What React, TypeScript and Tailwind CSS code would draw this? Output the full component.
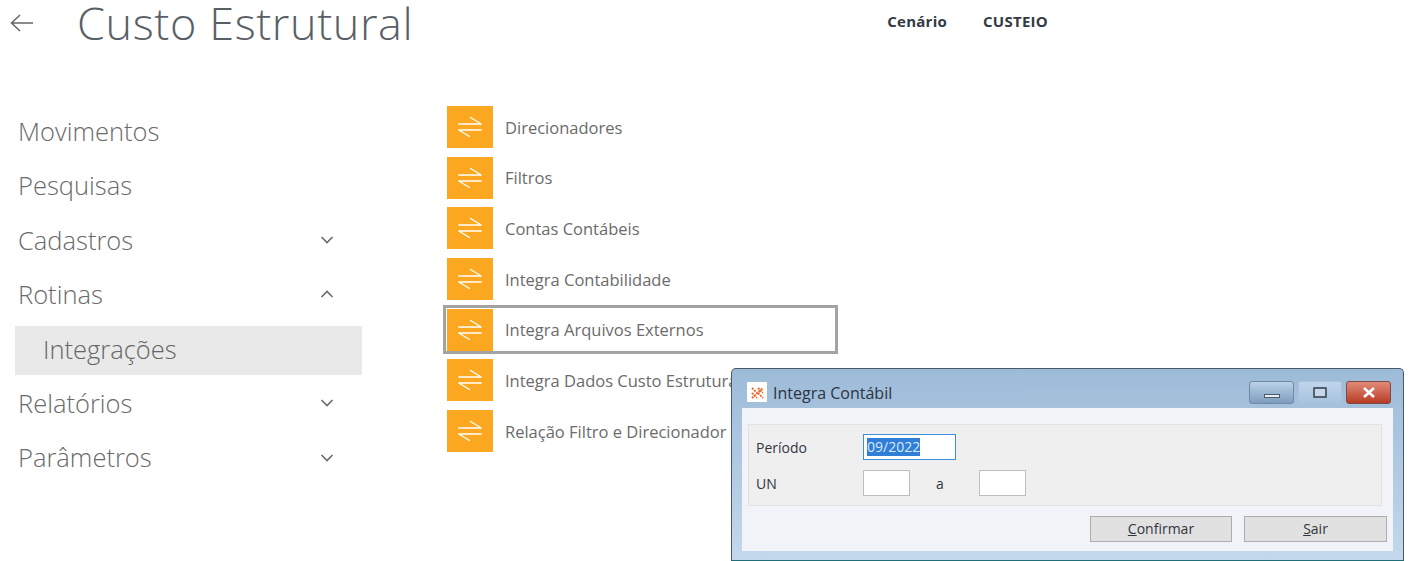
import React from "react";

const Swap = () => (
  <svg width="24" height="24" viewBox="0 0 24 24" fill="none" stroke="#fff" strokeWidth="1.4" strokeLinecap="round" strokeLinejoin="round">
    <path d="M0.8 9H23.2L12.5 2.5" />
    <path d="M23.2 15H0.8L11.5 21.5" />
  </svg>
);

const Chevron = ({ up }: { up?: boolean }) => (
  <svg width="14" height="8" viewBox="0 0 14 8" fill="none" stroke="#6a6a6a" strokeWidth="1.6">
    <path d={up ? "M1.5 7L7 1.5L12.5 7" : "M1.5 1L7 6.5L12.5 1"} />
  </svg>
);

const side: { t: string; c?: "d" | "u"; sel?: boolean }[] = [
  { t: "Movimentos" },
  { t: "Pesquisas" },
  { t: "Cadastros", c: "d" },
  { t: "Rotinas", c: "u" },
  { t: "Integrações", sel: true },
  { t: "Relatórios", c: "d" },
  { t: "Parâmetros", c: "d" },
];

const items = [
  "Direcionadores",
  "Filtros",
  "Contas Contábeis",
  "Integra Contabilidade",
  "Integra Arquivos Externos",
  "Integra Dados Custo Estrutural",
  "Relação Filtro e Direcionador",
];

export default function App() {
  return (
    <div className="relative w-[1416px] h-[561px] overflow-hidden bg-white font-['Open_Sans',sans-serif]">
      <header className="flex items-start h-[103.5px]">
        <svg className="ml-[10px] mt-[13px]" width="24" height="20" viewBox="0 0 24 20" fill="none" stroke="#666" strokeWidth="1.5">
          <path d="M1 10H23M10 2L1.5 10L10 18" />
        </svg>
        <h1 className="ml-[43px] text-[45px] leading-[45px] tracking-[0.6px] font-light text-[#5a5f66]">Custo Estrutural</h1>
        <div className="ml-[474px] mt-[11px] flex gap-[36px] text-[15px] leading-[20px] tracking-[0.25px] font-bold text-[#333a44]">
          <span>Cenário</span>
          <span>CUSTEIO</span>
        </div>
      </header>

      <main className="flex">
        <nav className="w-[347px] ml-[15px] shrink-0">
          {side.map((s) => (
            <div
              key={s.t}
              className={
                s.sel
                  ? "flex items-center h-[49px] mt-[4.5px] mb-[0.75px] pl-[28px] pb-[3px] bg-[#e9e9e9] text-[25.5px] font-light text-[#666]"
                  : "flex items-center justify-between h-[54.5px] pl-[3px] pr-[28px] text-[25.5px] font-light text-[#6a6a6a]"
              }
            >
              <span>{s.t}</span>
              {s.c && <Chevron up={s.c === "u"} />}
            </div>
          ))}
        </nav>

        <ul className="ml-[85px] mt-[2.5px] w-[391px]">
          {items.map((t) => (
            <li
              key={t}
              className={
                t === "Integra Arquivos Externos"
                  ? "flex items-center h-[49px] -mt-[3.5px] mb-[5.2px] ml-[-4px] pl-[1px] border-[3px] border-[#a3a3a3] whitespace-nowrap"
                  : "flex items-center h-[42px] mb-[8.7px] whitespace-nowrap"
              }
            >
              <span className="flex items-center justify-center w-[46px] h-[42px] shrink-0 bg-[#fba71f]">
                <Swap />
              </span>
              <span className="ml-[12px] pt-[2px] text-[16.5px] text-[#6b6b6b]">{t}</span>
            </li>
          ))}
        </ul>
      </main>

      <section className="absolute left-[731px] top-[368px] w-[673px] h-[193px] flex flex-col rounded-t-[5px] border border-[#4b5a68] border-b-[#1f6f78] bg-gradient-to-b from-[#9dbbd8] to-[#c3d8ec]">
        <div className="flex items-start h-[39px] pl-[15px] pr-[12px]">
          <span className="mt-[13px] flex items-center justify-center w-[20px] h-[20px] bg-white">
            <svg width="13" height="13" viewBox="0 0 13 13" fill="none" stroke="#ee6a2c" strokeWidth="2" strokeDasharray="2 1">
              <path d="M1 2L6 7M1 7L6 12M7 2L12 7M7 7L12 12M1 12L12 2" />
            </svg>
          </span>
          <span className="ml-[6px] mt-[14px] text-[16px] leading-[20px] text-[#2b3442]">Integra Contábil</span>
          <div className="ml-auto mt-[12px] flex gap-[4px]">
            <span className="flex items-center justify-center w-[45px] h-[23px] rounded-[3px] border border-[#6f8aa6] bg-gradient-to-b from-[#bcd2e8] to-[#7e9dbd]">
              <span className="mt-[6px] w-[16px] h-[4px] bg-[#e8eef4] border border-[#4a5a6a]" />
            </span>
            <span className="flex items-center justify-center w-[44px] h-[23px] rounded-[3px] border border-[#a8c2dc] bg-gradient-to-b from-[#c0d6ec] to-[#a6c2de]">
              <span className="w-[14px] h-[11px] border-2 border-[#4f6070] rounded-[1px] bg-[#c8d8e8]" />
            </span>
            <span className="flex items-center justify-center w-[45px] h-[23px] rounded-[3px] border border-[#7b4a44] bg-gradient-to-b from-[#e08a78] to-[#b83a24]">
              <svg width="14" height="11" viewBox="0 0 14 11" stroke="#fff" strokeWidth="2.6" fill="none">
                <path d="M2 1L12 10M12 1L2 10" />
              </svg>
            </span>
          </div>
        </div>

        <div className="flex-1 mx-[10px] mb-[9px] bg-[#f1f3f8] pt-[16px] px-[6px] text-[14px] text-[#2f3640]">
          <div className="w-[634px] h-[82px] bg-[#efefef] border border-[#e2e2e2] pl-[7px] pt-[9px]">
            <div className="flex items-center h-[26px]">
              <span className="w-[107px]">Período</span>
              <span className="flex items-center w-[93px] h-[26px] pl-[3px] bg-white border border-[#3d8fe0]">
                <span className="bg-[#2f7fd8] leading-[18px] text-[#dbe8f8]">09/2022</span>
              </span>
            </div>
            <div className="flex items-center h-[26px] mt-[10px]">
              <span className="w-[107px]">UN</span>
              <span className="w-[47px] h-[26px] bg-white border border-[#bdbdbd]" />
              <span className="ml-[26px] w-[43px]">a</span>
              <span className="w-[47px] h-[26px] bg-white border border-[#bdbdbd]" />
            </div>
          </div>
          <div className="flex justify-end gap-[12px] mt-[10px]">
            <button className="w-[142px] h-[26px] bg-[#e1e1e1] border border-[#adadad] leading-[24px]">
              <u>C</u>onfirmar
            </button>
            <button className="w-[143px] h-[26px] bg-[#e1e1e1] border border-[#adadad] leading-[24px]">
              <u>S</u>air
            </button>
          </div>
        </div>
      </section>
    </div>
  );
}
